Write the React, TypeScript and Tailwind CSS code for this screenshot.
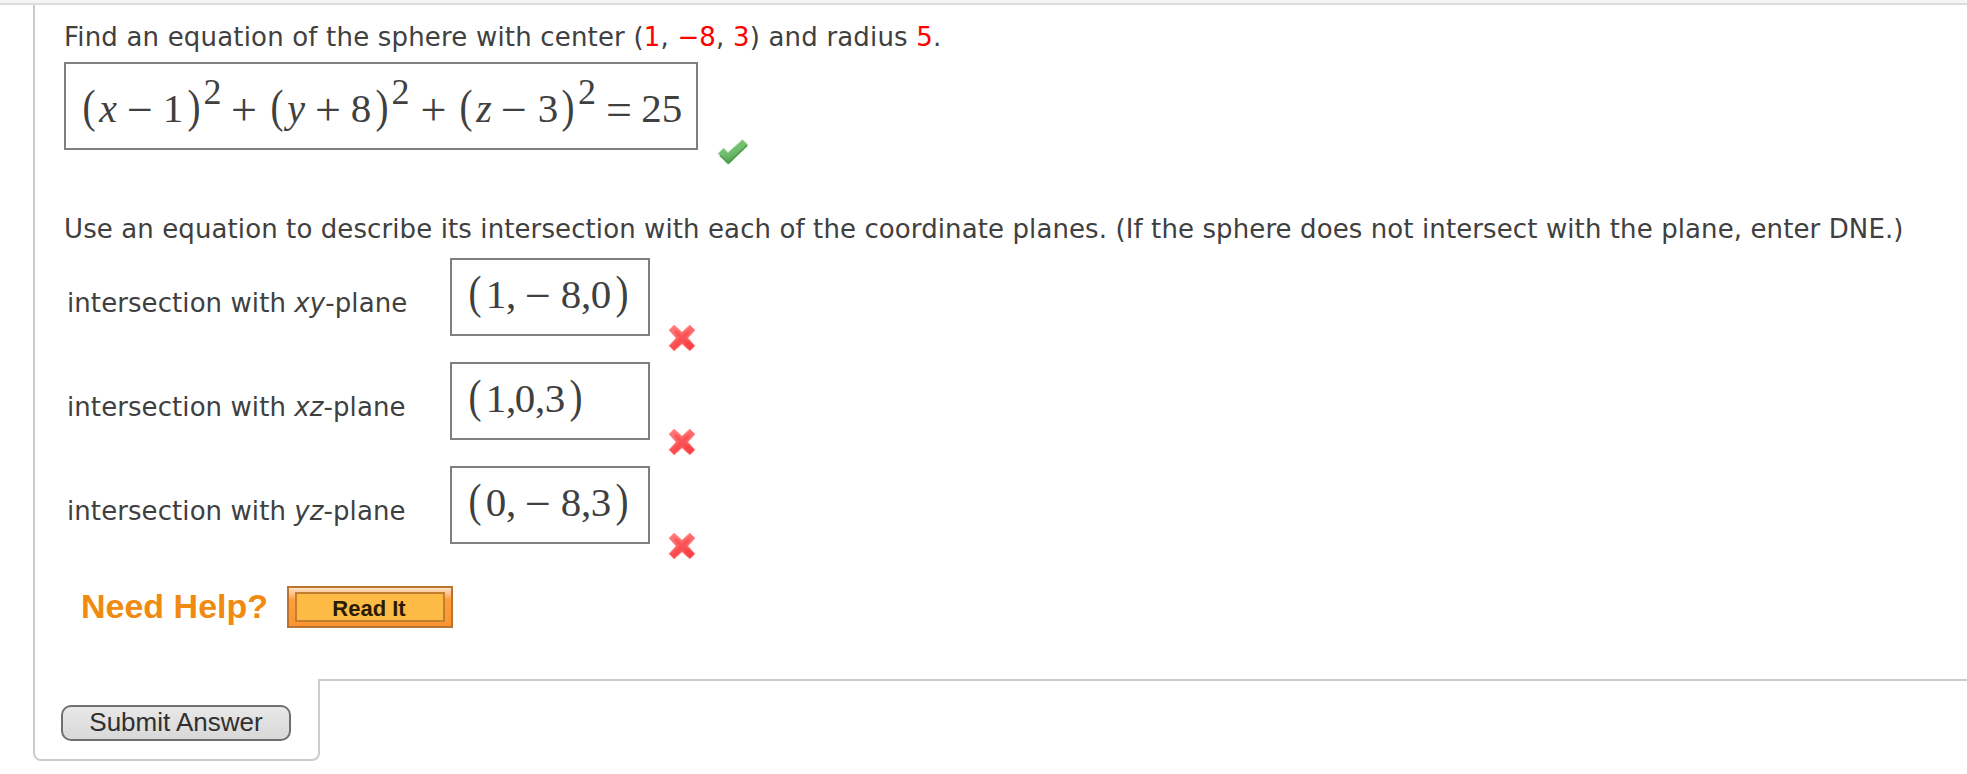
import React from "react";

type Glyph = {
  char: string;
  // distance from the previous glyph's centre
  step: number;
  kind?: "paren" | "var" | "sup" | "op";
};

const equation: Glyph[] = [
  { char: "(", step: 23, kind: "paren" },
  { char: "x", step: 19, kind: "var" },
  { char: "−", step: 32, kind: "op" },
  { char: "1", step: 33 },
  { char: ")", step: 21, kind: "paren" },
  { char: "2", step: 18.5, kind: "sup" },
  { char: "+", step: 31.5, kind: "op" },
  { char: "(", step: 33, kind: "paren" },
  { char: "y", step: 19, kind: "var" },
  { char: "+", step: 32, kind: "op" },
  { char: "8", step: 33 },
  { char: ")", step: 20.5, kind: "paren" },
  { char: "2", step: 19, kind: "sup" },
  { char: "+", step: 33, kind: "op" },
  { char: "(", step: 32.5, kind: "paren" },
  { char: "z", step: 18, kind: "var" },
  { char: "−", step: 30, kind: "op" },
  { char: "3", step: 34 },
  { char: ")", step: 19.5, kind: "paren" },
  { char: "2", step: 19.5, kind: "sup" },
  { char: "=", step: 32, kind: "op" },
  { char: "2", step: 32.5 },
  { char: "5", step: 20.5 },
];

const planes: { name: string; answer: Glyph[] }[] = [
  {
    name: "xy",
    answer: [
      { char: "(", step: 23, kind: "paren" },
      { char: "1", step: 21 },
      { char: ",", step: 15 },
      { char: "−", step: 27, kind: "op" },
      { char: "8", step: 33 },
      { char: ",", step: 15 },
      { char: "0", step: 15 },
      { char: ")", step: 21, kind: "paren" },
    ],
  },
  {
    name: "xz",
    answer: [
      { char: "(", step: 23, kind: "paren" },
      { char: "1", step: 21 },
      { char: ",", step: 15 },
      { char: "0", step: 14 },
      { char: ",", step: 15 },
      { char: "3", step: 15 },
      { char: ")", step: 21, kind: "paren" },
    ],
  },
  {
    name: "yz",
    answer: [
      { char: "(", step: 23, kind: "paren" },
      { char: "0", step: 21 },
      { char: ",", step: 15 },
      { char: "−", step: 27, kind: "op" },
      { char: "8", step: 33 },
      { char: ",", step: 15 },
      { char: "3", step: 15 },
      { char: ")", step: 21, kind: "paren" },
    ],
  },
];

const glyphStyle = {
  paren: "text-[46px] scale-x-85",
  var: "text-[40px] italic",
  sup: "text-[36px] -translate-y-[18px]",
  op: "text-[46px] translate-y-[3px]",
};

const MathText = ({ glyphs }: { glyphs: Glyph[] }) => (
  <div className="flex items-baseline font-['Liberation_Serif',serif] text-[41px] leading-[60px]">
    {glyphs.map((g, i) => (
      <span
        key={i}
        className={`flex w-0 justify-center ${g.kind ? glyphStyle[g.kind] : ""}`}
        style={{ marginLeft: g.step }}
      >
        {g.char}
      </span>
    ))}
  </div>
);

const CheckIcon = () => (
  <svg width="32" height="26" viewBox="0 0 32 26">
    <defs>
      <linearGradient id="check" x1="0" y1="0" x2="0.4" y2="1">
        <stop offset="0" stopColor="#7fc97c" />
        <stop offset="0.6" stopColor="#6fbd6c" />
        <stop offset="1" stopColor="#4f9f4d" />
      </linearGradient>
    </defs>
    <path
      d="M1.2 14.5 L6.5 9.2 L11 13.5 L25.5 0.8 L31 6 L12 25 H10.5 Z"
      fill="url(#check)"
      stroke="#a8d8a6"
      strokeWidth="1"
      strokeLinejoin="round"
    />
    <path d="M3 16.5 L11.3 24 L30 6.5" fill="none" stroke="#4a9a48" strokeWidth="1.5" />
  </svg>
);

const CrossIcon = () => (
  <svg width="28" height="28" viewBox="0 0 28 28">
    <defs>
      <linearGradient id="cross" x1="0" y1="0" x2="0.3" y2="1">
        <stop offset="0" stopColor="#ff8080" />
        <stop offset="1" stopColor="#fb4045" />
      </linearGradient>
    </defs>
    <path
      d="M6.2 1 L14 8.2 L21.8 1 L27 6.2 L19.8 14 L27 21.8 L21.8 27 L14 19.8 L6.2 27 L1 21.8 L8.2 14 L1 6.2 Z"
      fill="url(#cross)"
      stroke="#ffa0a0"
      strokeWidth="1"
      strokeLinejoin="round"
    />
    <path d="M8 8 L20 20 M20 8 L8 20" stroke="#f9474b" strokeWidth="2.5" strokeLinecap="round" opacity="0.5" />
  </svg>
);

const App = () => {
  return (
    <div className="h-[774px] w-full overflow-hidden bg-white font-['DejaVu_Sans',sans-serif] text-[26px] text-[#404040]">
      <div className="h-[5px] border-b-2 border-[#dddddd] bg-[#f5f5f5]" />
      <main className="ml-[33px] h-[674px] border-l-2 border-[#cccccc] pt-[7px] pl-[29px]">
        <p className="h-[50px] whitespace-nowrap leading-[50px] tracking-[0.18px]">
          Find an equation of the sphere with center (<span className="text-[#ff0000]">1</span>,{" "}
          <span className="text-[#ff0000]">−8</span>, <span className="text-[#ff0000]">3</span>) and radius{" "}
          <span className="text-[#ff0000]">5</span>.
        </p>
        <div className="flex">
          <div className="h-[88px] w-[634px] border-2 border-[#808080] pt-[13px]">
            <MathText glyphs={equation} />
          </div>
          <div className="mt-[77px] ml-[19px] h-0">
            <CheckIcon />
          </div>
        </div>

        <p className="mt-[50px] h-[58px] whitespace-nowrap leading-[58px] tracking-[0.1px]">
          Use an equation to describe its intersection with each of the coordinate planes. (If the sphere does not
          intersect with the plane, enter DNE.)
        </p>
        <div className="flex flex-col gap-[26px]">
          {planes.map((plane) => (
            <div key={plane.name} className="flex h-[78px]">
              <div className="w-[386px] pt-1.5 pl-[3px] leading-[78px] whitespace-nowrap tracking-[0.08px]">
                intersection with <em>{plane.name}</em>-plane
              </div>
              <div className="w-[200px] border-2 border-[#808080] pt-[3px]">
                <MathText glyphs={plane.answer} />
              </div>
              <div className="mt-[66px] ml-[18px]">
                <CrossIcon />
              </div>
            </div>
          ))}
        </div>

        <div className="mt-[42px] flex h-[42px] items-center font-['Liberation_Sans',sans-serif] font-bold">
          <span className="w-[223px] pb-0.5 pl-[17px] text-[34px] leading-[40px] whitespace-nowrap text-[#f08a10]">
            Need Help?
          </span>
          <button className="h-[42px] w-[166px] border-2 border-[#b87530] bg-linear-to-b from-[#ffe3c8] via-[#ff9f3c] via-30% to-[#fb9430] px-1.5 pt-1 pb-1">
            <span className="flex h-[30px] items-center justify-center border-2 border-[#c08030] bg-[#fdbb45] pt-0.5 pr-0.5 text-[22px] text-[#2a1c00]">
              Read It
            </span>
          </button>
        </div>
      </main>

      <div className="flex">
        <div className="ml-[33px] h-[82px] w-[287px] rounded-b-lg border-2 border-t-0 border-[#cccccc] pt-[26px] pl-[26px]">
          <button className="block h-[36px] w-[230px] rounded-[10px] border-2 border-[#707070] bg-linear-to-b from-[#e8e8e8] to-[#d8d8d8] pb-0.5 font-['Liberation_Sans',sans-serif] text-[26px] leading-[30px] text-[#303030]">
            Submit Answer
          </button>
        </div>
        <div className="-ml-0.5 h-0.5 flex-1 bg-[#cccccc]" />
      </div>
    </div>
  );
};

export default App;
